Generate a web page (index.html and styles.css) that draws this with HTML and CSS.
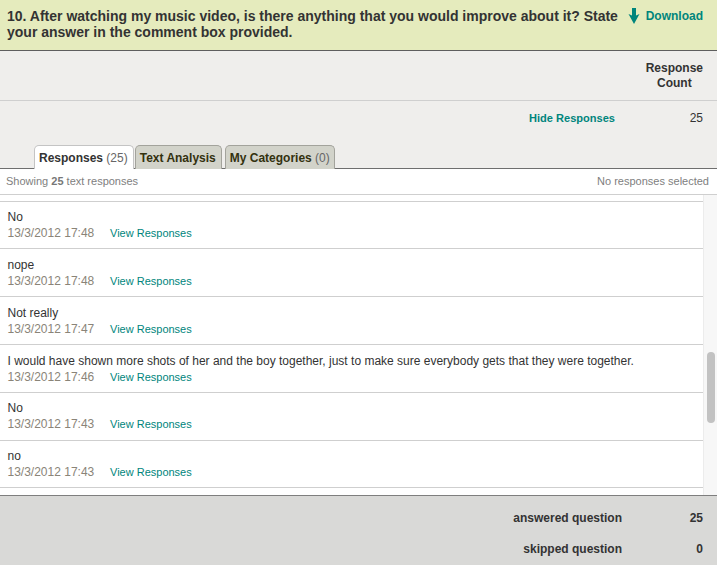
FILE: index.html
```html
<!DOCTYPE html>
<html lang="en">
<head>
<meta charset="utf-8">
<title>Question 10</title>
<link rel="stylesheet" href="styles.css">
</head>
<body>
<div class="page">
  <header class="question">
    <h1 class="question-title">10. After watching my music video, is there anything that you would improve about it? State your answer in the comment box provided.</h1>
    <a class="download">
      <svg class="download-icon" width="12" height="16" viewBox="0 0 12 16"><path d="M4 0h4v7.5l3.5-1.5L6 16 .5 6 4 7.5z" fill="#00857c"/></svg>
      <span>Download</span>
    </a>
  </header>
  <div class="count-head"><div class="count-label">Response<br>Count</div></div>
  <div class="summary">
    <div class="summary-row"><a class="hide-link">Hide Responses</a><span class="summary-count">25</span></div>
    <nav class="tabs">
      <a class="tab tab-active">Responses <span class="tab-num">(25)</span></a>
      <a class="tab">Text Analysis</a>
      <a class="tab tab-last">My Categories <span class="tab-num">(0)</span></a>
    </nav>
  </div>
  <div class="status"><span>Showing <b>25</b> text responses</span><span>No responses selected</span></div>
  <div class="list-wrap">
    <div class="list">
      <div class="row row-stub"></div>
      <div class="row"><p class="answer">No</p><p class="meta"><time class="date">13/3/2012 17:48</time><a class="view">View Responses</a></p></div>
      <div class="row"><p class="answer">nope</p><p class="meta"><time class="date">13/3/2012 17:48</time><a class="view">View Responses</a></p></div>
      <div class="row"><p class="answer">Not really</p><p class="meta"><time class="date">13/3/2012 17:47</time><a class="view">View Responses</a></p></div>
      <div class="row"><p class="answer">I would have shown more shots of her and the boy together, just to make sure everybody gets that they were together.</p><p class="meta"><time class="date">13/3/2012 17:46</time><a class="view">View Responses</a></p></div>
      <div class="row"><p class="answer">No</p><p class="meta"><time class="date">13/3/2012 17:43</time><a class="view">View Responses</a></p></div>
      <div class="row"><p class="answer">no</p><p class="meta"><time class="date">13/3/2012 17:43</time><a class="view">View Responses</a></p></div>
    </div>
    <div class="scrollbar"><div class="thumb"></div></div>
  </div>
  <footer class="totals">
    <div class="total-row"><span class="total-label">answered question</span><span class="total-value">25</span></div>
    <div class="total-row"><span class="total-label">skipped question</span><span class="total-value">0</span></div>
  </footer>
</div>
</body>
</html>
```
FILE: styles.css
```css
* { box-sizing: border-box; }
html, body { margin: 0; padding: 0; }
body { font-family: "Liberation Sans", Arial, sans-serif; color: #333; background: #fff; overflow: hidden; }
.page { width: 717px; height: 565px; display: flex; flex-direction: column; overflow: hidden; }

.question { height: 51px; background: #e5ebbd; border-bottom: 1px solid #5e5e5e; display: flex; padding: 8px 14px 0 7px; justify-content: space-between; }
.question-title { margin: 0; width: 618px; font-size: 14px; line-height: 16px; font-weight: bold; color: #333; }
.download { display: flex; gap: 6px; color: #00857c; font-size: 12px; font-weight: bold; line-height: 16px; }
.download-icon { margin-top: 0; }

.count-head { height: 50px; background: #efeeec; border-bottom: 1px solid #cfcfcf; padding: 10px 14px 0 0; display: flex; justify-content: flex-end; }
.count-label { text-align: center; font-size: 12px; line-height: 15px; font-weight: bold; color: #333; }

.summary { height: 68px; background: #efeeec; border-bottom: 1px solid #6e6e6e; display: flex; flex-direction: column; justify-content: space-between; }
.summary-row { display: flex; justify-content: flex-end; align-items: center; padding: 9px 14px 0 0; line-height: 16px; }
.hide-link { font-size: 11.05px; font-weight: bold; color: #00857c; }
.summary-count { width: 88px; text-align: right; font-size: 12px; color: #333; }

.tabs { display: flex; gap: 3px; padding-left: 34px; height: 24px; margin-bottom: -1px; }
.tab { display: block; height: 24px; padding: 5px 5px 0 4px; font-size: 12px; line-height: 15px; font-weight: bold; color: #33310f; background: #d2d3ca; border: 1px solid #a3a39c; border-bottom: 0; border-radius: 5px 5px 0 0; white-space: nowrap; }
.tab-active { background: #fff; color: #333; border-color: #c4c4c4; margin-right: -2px; }
.tab-last { padding-right: 4px; }
.tab-num { font-weight: normal; color: #666; }

.status { height: 26px; flex: none; background: #fff; border-bottom: 1px solid #cfcfcf; display: flex; justify-content: space-between; align-items: center; padding: 0 8px 2px 6px; font-size: 11px; color: #808080; }
.status b { color: #777; }

.list-wrap { flex: 1; min-height: 0; display: flex; background: #fff; }
.list { flex: 1; min-width: 0; overflow: hidden; }
.row { height: 47.8px; padding: 7.6px 0 0 7.5px; border-bottom: 1px solid #cfcfcf; }
.row-stub { height: 6.6px; padding: 0; }
.answer { margin: 0; font-size: 12px; line-height: 16px; color: #333; white-space: nowrap; }
.meta { margin: 0; display: flex; font-size: 12px; line-height: 16px; }
.date { width: 102.5px; color: #8a8478; }
.view { font-size: 11px; color: #00857c; }

.scrollbar { width: 14px; flex: none; background: #f7f7f7; border-left: 1px solid #ececec; padding: 157px 2px 0 3px; }
.thumb { height: 71px; background: #c2c2c2; border-radius: 4px; }

.totals { height: 70px; flex: none; background: #d9d9d7; border-top: 1px solid #7e7e7e; padding-top: 14px; display: flex; flex-direction: column; gap: 15px; }
.total-row { display: flex; justify-content: flex-end; padding-right: 14px; font-size: 12px; line-height: 16px; font-weight: bold; color: #333; }
.total-label { text-align: right; }
.total-value { width: 81px; text-align: right; }
```
